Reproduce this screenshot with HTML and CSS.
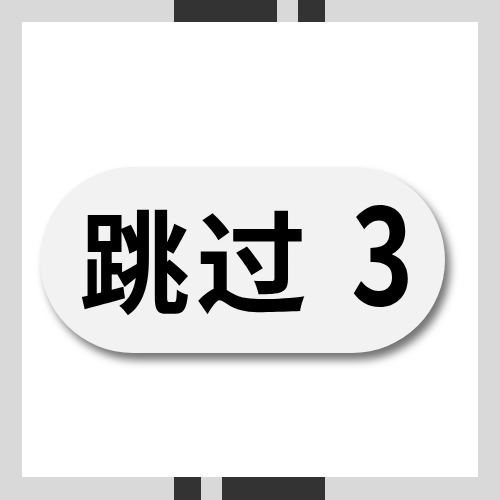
FILE: index.html
```html
<!DOCTYPE html>
<html lang="zh-CN">

<head>
  <meta charset="UTF-8" />
  <meta name="viewport" content="width=device-width, initial-scale=1.0" />
  <title>跳过</title>
  <link rel="stylesheet" href="styles.css">
</head>

<body>

  <div class="frame">

    <div class="strip strip-top">
      <span class="bar bar-wide"></span>
      <span class="bar bar-narrow"></span>
    </div>

    <main class="card">
      <button class="skip" type="button">
        <span class="skip-label">跳过</span>
        <span class="skip-count">3</span>
      </button>
    </main>

    <div class="strip strip-bottom">
      <span class="bar bar-narrow"></span>
      <span class="bar bar-wide"></span>
    </div>

  </div>

</body>

</html>
```

FILE: styles.css
```css
* {
  border: 0;
  box-sizing: border-box;
  margin: 0;
  padding: 0;
}
:root {
  --frame: hsl(0, 0%, 85%);
  --bar: hsl(0, 0%, 20%);
  --pill: hsl(0, 0%, 95%);
  --fg: hsl(0, 0%, 0%);
}
body {
  background-color: var(--frame);
  font-family: "Noto Sans CJK SC", "Noto Sans", sans-serif;
}
.frame {
  display: grid;
  grid-template-rows: 22px 455px 23px;
  width: 500px;
  height: 500px;
}

/* Dark tabs on the top and bottom edges */
.strip {
  display: flex;
  gap: 21px;
  padding-left: 174px;
}
.bar {
  background-color: var(--bar);
  display: block;
  height: 100%;
}
.bar-wide {
  width: 103px;
}
.bar-narrow {
  width: 27px;
}

.card {
  background-color: hsl(0, 0%, 100%);
  margin: 0 22px;
  padding: 145px 0 0 18px;
}

.skip {
  align-items: baseline;
  background-color: var(--pill);
  border-radius: 93px;
  box-shadow: 5px 7px 9px hsla(0, 0%, 0%, 0.55);
  color: var(--fg);
  display: flex;
  font: 700 111px/1 "Noto Sans CJK SC", sans-serif;
  width: 405px;
  height: 186px;
  padding: 14px 0 0 39px;
}
.skip-label {
  letter-spacing: 6px;
}
/* the digit is drawn taller and narrower than the font's own */
.skip-count {
  display: inline-block;
  font-size: 133px;
  margin-left: 38px;
  transform: scaleX(0.8);
  transform-origin: left bottom;
}
```
